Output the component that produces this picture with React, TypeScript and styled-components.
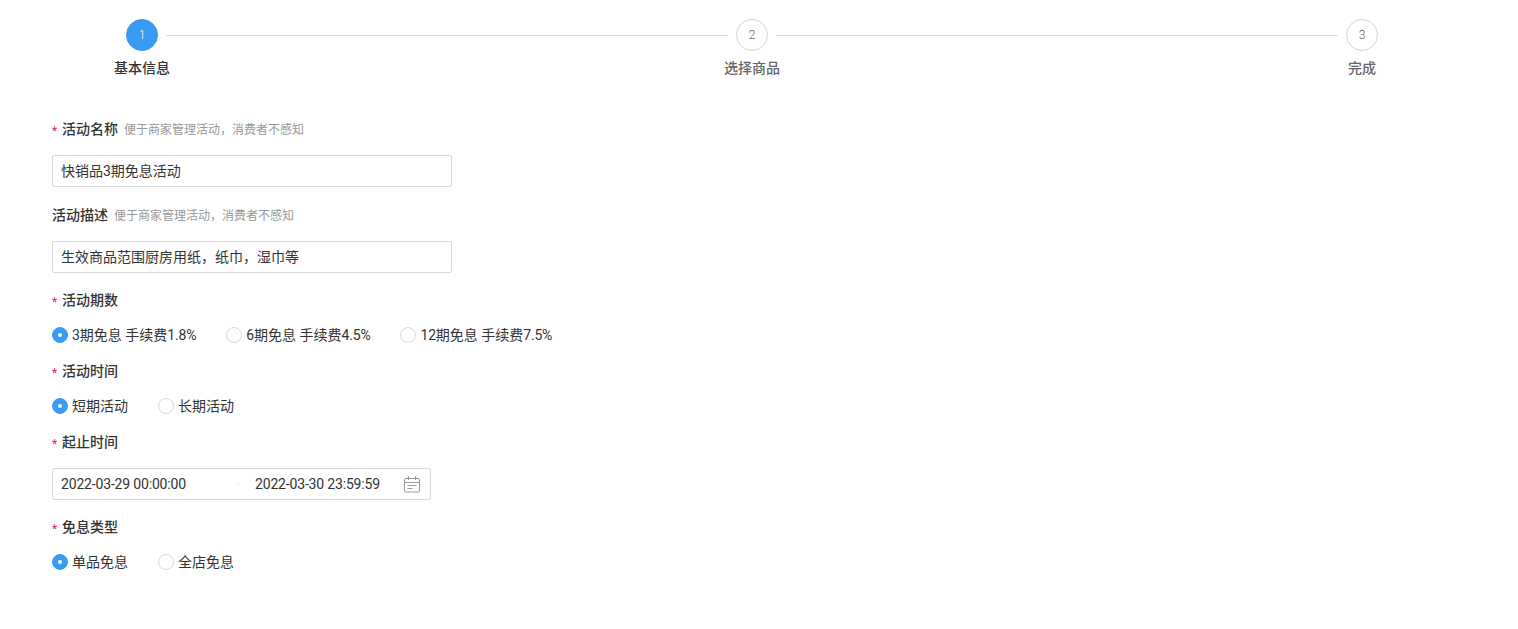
import React from "react";
import styled, { createGlobalStyle } from "styled-components";

const GlobalStyle = createGlobalStyle`
  html, body {
    margin: 0;
    padding: 0;
    background: #fff;
    font-family: Roboto, "Noto Sans CJK SC", sans-serif;
    color: #333;
  }
`;

const PageWrap = styled.div`
  width: 1518px;
  height: 629px;
  overflow: hidden;
  box-sizing: border-box;
  padding: 19px 0 0 52px;
`;

const StepsRow = styled.div`
  display: flex;
  padding-left: 62px;
  margin-bottom: 40px;
`;

const StepItem = styled.div<{ $last?: boolean }>`
  width: ${(p) => (p.$last ? "auto" : "610px")};
  display: flex;
  flex-direction: column;
`;

const StepHead = styled.div`
  display: flex;
  align-items: center;
  padding-left: 12px;
`;

const StepCircle = styled.div<{ $active?: boolean }>`
  width: 32px;
  height: 32px;
  box-sizing: border-box;
  border-radius: 50%;
  border: 1px solid ${(p) => (p.$active ? "#3a9bf5" : "#d4d4d4")};
  background: ${(p) => (p.$active ? "#3a9bf5" : "#fff")};
  color: ${(p) => (p.$active ? "#fff" : "#666")};
  font-size: 12px;
  font-weight: 300;
  display: flex;
  align-items: center;
  justify-content: center;
  flex-shrink: 0;
`;

const StepLine = styled.div`
  flex: 1;
  height: 1px;
  background: #dcdcdc;
  margin: 0 -4px 0 8px;
`;

const StepLabel = styled.div<{ $active?: boolean }>`
  width: 56px;
  margin-top: 7px;
  font-size: 14px;
  line-height: 20px;
  font-weight: 500;
  text-align: center;
  color: ${(p) => (p.$active ? "#333" : "#666")};
`;

const FieldLabel = styled.div<{ $top: number; $gap: number }>`
  display: flex;
  align-items: center;
  height: 20px;
  margin-top: ${(p) => p.$top}px;
  margin-bottom: ${(p) => p.$gap}px;
`;

const Star = styled.span`
  color: #e0245e;
  font-size: 12px;
  width: 10px;
  line-height: 20px;
  padding-top: 3px;
  box-sizing: border-box;
  height: 20px;
`;

const LabelText = styled.span`
  font-size: 14px;
  font-weight: 500;
  color: #333;
`;

const Hint = styled.span`
  font-size: 12px;
  color: #999;
  margin-left: 6px;
`;

const TextBox = styled.div`
  width: 400px;
  height: 32px;
  box-sizing: border-box;
  border: 1px solid #d9d9d9;
  border-radius: 2px;
  padding: 0 8px;
  font-size: 14px;
  line-height: 30px;
  color: #333;
`;

const RadioRow = styled.div`
  display: flex;
  gap: 30px;
  height: 20px;
`;

const RadioItem = styled.label`
  display: flex;
  align-items: center;
  gap: 4px;
  font-size: 14px;
  color: #333;
`;

const RadioDot = styled.span<{ $on?: boolean }>`
  width: 16px;
  height: 16px;
  margin-top: 2px;
  box-sizing: border-box;
  border-radius: 50%;
  border: 1px solid ${(p) => (p.$on ? "#3a9bf5" : "#d9d9d9")};
  background: ${(p) => (p.$on ? "#3a9bf5" : "#fff")};
  display: flex;
  align-items: center;
  justify-content: center;
  &::after {
    content: "";
    display: ${(p) => (p.$on ? "block" : "none")};
    width: 4px;
    height: 4px;
    border-radius: 50%;
    background: #fff;
  }
`;

const RadioText = styled.span`
  white-space: pre;
`;

const Num = styled.span`
  letter-spacing: -0.2px;
`;

const DateBox = styled.div`
  width: 379px;
  height: 32px;
  box-sizing: border-box;
  border: 1px solid #d9d9d9;
  border-radius: 2px;
  padding-left: 8px;
  display: flex;
  align-items: center;
  font-size: 14px;
  color: #333;
`;

const DateValue = styled.span<{ $width: number }>`
  width: ${(p) => p.$width}px;
  flex-shrink: 0;
  letter-spacing: -0.17px;
`;

const DateDash = styled.span`
  width: 18px;
  flex-shrink: 0;
  margin-right: 8px;
  color: #ccc;
  font-size: 8px;
  text-align: center;
`;

const CalendarIcon = styled.svg`
  margin-left: auto;
  margin-right: 9px;
  width: 18px;
  height: 18px;
  color: #999;
`;

const Calendar = () => (
  <CalendarIcon viewBox="0 0 18 18" fill="none" stroke="currentColor" strokeWidth="1">
    <rect x="1.5" y="3.5" width="15" height="13.5" rx="1" />
    <path d="M1.5 7.5h15M5.5 1v4M12.5 1v4M4.5 10.5h9M4.5 13.5h5" />
  </CalendarIcon>
);

const steps = ["基本信息", "选择商品", "完成"];

const Radios = ({ items }: { items: React.ReactNode[] }) => (
  <RadioRow>
    {items.map((text, i) => (
      <RadioItem key={i}>
        <RadioDot $on={i === 0} />
        <RadioText>{text}</RadioText>
      </RadioItem>
    ))}
  </RadioRow>
);

const App: React.FC = () => {
  return (
    <PageWrap>
      <GlobalStyle />
      <StepsRow>
        {steps.map((s, i) => (
          <StepItem key={s} $last={i === steps.length - 1}>
            <StepHead>
              <StepCircle $active={i === 0}>{i + 1}</StepCircle>
              {i < steps.length - 1 && <StepLine />}
            </StepHead>
            <StepLabel $active={i === 0}>{s}</StepLabel>
          </StepItem>
        ))}
      </StepsRow>

      <FieldLabel $top={0} $gap={17}>
        <Star>*</Star>
        <LabelText>活动名称</LabelText>
        <Hint>便于商家管理活动，消费者不感知</Hint>
      </FieldLabel>
      <TextBox>快销品3期免息活动</TextBox>

      <FieldLabel $top={17} $gap={17}>
        <LabelText>活动描述</LabelText>
        <Hint>便于商家管理活动，消费者不感知</Hint>
      </FieldLabel>
      <TextBox>生效商品范围厨房用纸，纸巾，湿巾等</TextBox>

      <FieldLabel $top={16} $gap={15}>
        <Star>*</Star>
        <LabelText>活动期数</LabelText>
      </FieldLabel>
      <Radios
        items={[
          <>3期免息 手续费<Num>1.8%</Num></>,
          <>6期免息 手续费<Num>4.5%</Num></>,
          <><Num>12</Num>期免息 手续费<Num>7.5%</Num></>,
        ]}
      />

      <FieldLabel $top={16} $gap={15}>
        <Star>*</Star>
        <LabelText>活动时间</LabelText>
      </FieldLabel>
      <Radios items={["短期活动", "长期活动"]} />

      <FieldLabel $top={16} $gap={17}>
        <Star>*</Star>
        <LabelText>起止时间</LabelText>
      </FieldLabel>
      <DateBox>
        <DateValue $width={168}>2022-03-29 00:00:00</DateValue>
        <DateDash>-</DateDash>
        <DateValue $width={140}>2022-03-30 23:59:59</DateValue>
        <Calendar />
      </DateBox>

      <FieldLabel $top={16} $gap={15}>
        <Star>*</Star>
        <LabelText>免息类型</LabelText>
      </FieldLabel>
      <Radios items={["单品免息", "全店免息"]} />
    </PageWrap>
  );
};

export default App;
